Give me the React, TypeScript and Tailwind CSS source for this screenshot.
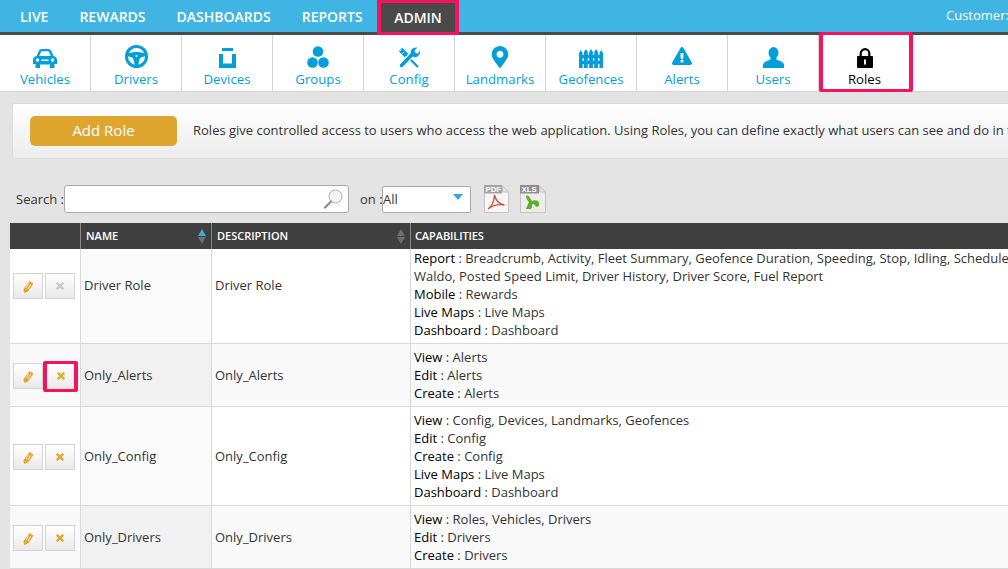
import React from 'react';
import { FaExclamationTriangle, FaMapMarkerAlt } from 'react-icons/fa';

const CarIcon = () => (
    <svg width="24" height="19" viewBox="0 0 24 19" fill="#009fdb">
        <path d="M3.500 7L6 1.800C6.400.7 7.200 0 8.500 0h7c1.300 0 2.100.7 2.500 1.800L20.500 7c2 .5 3.500 2 3.500 4v4h-2.500v4H17v-3.500H7V19H2.500v-4H0v-4c0-2 1.500-3.500 3.500-4z" />
        <path d="M6.200 7L8 3c.2-.5.5-.7 1-.7h6c.5 0 .8.2 1 .7l1.800 4z" fill="#fff" />
        <circle cx="4.500" cy="11" r="1.700" fill="#fff" />
        <circle cx="19.500" cy="11" r="1.700" fill="#fff" />
        <rect x="8.500" y="10.500" width="7" height="1.500" fill="#fff" />
    </svg>
);

const SteeringIcon = () => (
    <svg width="23" height="23" viewBox="0 0 23 23" fill="#009fdb">
        <circle cx="11.500" cy="11.500" r="10" fill="none" stroke="#009fdb" strokeWidth="3" />
        <path d="M2.500 8.500C8 6.500 15 6.500 20.500 8.500v2.500l-5.500 2-2 7.500h-3L8 13l-5.500-2z" />
        <circle cx="11.500" cy="11" r="1" fill="#fff" />
    </svg>
);

const DeviceIcon = () => (
    <svg width="17" height="20" viewBox="0 0 17 20" fill="#009fdb">
        <rect x="3" y="0" width="11" height="3" />
        <path d="M0 6h4v9.500h9V6h4v14H0z" />
    </svg>
);

const GroupsIcon = () => (
    <svg width="22" height="22" viewBox="0 0 22 22" fill="#009fdb">
        <circle cx="11" cy="5.500" r="5.300" />
        <circle cx="5.500" cy="16.500" r="5.300" />
        <circle cx="16.500" cy="16.500" r="5.300" />
    </svg>
);

const ToolsIcon = () => (
    <svg width="22" height="21" viewBox="0 0 22 21" fill="none" stroke="#009fdb">
        <path d="M2.500 2.500l6 6" strokeWidth="5" stroke="#009fdb" />
        <path d="M1.500 4.500l2-2M4 7l2-2" strokeWidth="0.800" stroke="#fff" />
        <path d="M8 8l12 12" strokeWidth="2.200" />
        <path d="M4 18L14 7.500" strokeWidth="6" stroke="#fff" />
        <path d="M3.500 18.500L14.500 7" strokeWidth="3.500" strokeLinecap="round" />
        <path d="M13 3.500C14 1 17 0 19.500.5L16.500 3.500l1 2.500 2.500.5 2-3c.5 3-1 5.500-3.500 6.500-2 .5-4 0-5-1.500-1-1.500-1-3-.5-4.500z" fill="#009fdb" stroke="none" />
    </svg>
);

const FenceIcon = () => (
    <svg width="24" height="19" viewBox="0 0 24 19" fill="#009fdb">
        <path d="M0 4l1.800-3 1.800 3v15H0zM5 3l1.900-3 1.900 3v16H5zM10.100 3L12 0l1.900 3v16h-3.800zM15.200 3l1.900-3L19 3v16h-3.800zM20.400 4l1.800-3L24 4v15h-3.600z" />
        <rect x="0" y="6" width="24" height="3" />
        <rect x="0" y="12" width="24" height="3" />
    </svg>
);

const UserIcon = () => (
    <svg width="21" height="21" viewBox="0 0 21 21" fill="#009fdb">
        <ellipse cx="10.500" cy="5.800" rx="5" ry="5.800" />
        <path d="M7.500 10.500v2c-3 1.500-6.500 2-7.500 5V21h21v-3.500c-1-3-4.500-3.500-7.500-5v-2z" />
    </svg>
);

const LockIcon = () => (
    <svg width="16" height="20" viewBox="0 0 16 20" fill="#000">
        <path d="M3.700 9V5.500a4.300 4.300 0 0 1 8.600 0V9" fill="none" stroke="#000" strokeWidth="2.200" />
        <rect x="0" y="8" width="16" height="12" rx="1" />
        <rect x="7" y="11.500" width="2" height="5" fill="#fff" />
    </svg>
);

const PencilIcon = () => (
    <svg width="11" height="13" viewBox="0 0 11 13" fill="#e0a82e">
        <path d="M6.500 1L10.500 3.500 5 11.500 1 13 .5 9z" />
        <path d="M5.500 3.500L3 8M7.500 4.500L5 9" stroke="#fff" strokeWidth="0.700" />
    </svg>
);

const CrossIcon = ({ color }: { color: string }) => (
    <svg width="8" height="8" viewBox="0 0 8 8" fill="none" stroke={color} strokeWidth="2.300">
        <path d="M.7.7l6.600 6.600M7.300.7L.7 7.300" />
    </svg>
);

const PdfIcon = () => (
    <svg width="25" height="28" viewBox="0 0 25 28">
        <path d="M.5 1h18l6 6v20.500H.5z" fill="#f7f7f7" stroke="#c4c4c4" />
        <path d="M18.500 1v6h6z" fill="#e2e2e2" stroke="#c4c4c4" />
        <rect x="0" y="0" width="18" height="8.500" fill="#a3a3a3" />
        <text x="1.500" y="7.300" fontSize="7.800" fontWeight="700" fill="#fff" fontFamily="'Liberation Sans', sans-serif">PDF</text>
        <path d="M4 24c3-2 6-7 6.500-14 1 5 4 9 10 10-6-1-11 0-16.500 4z" fill="none" stroke="#e04a3a" strokeWidth="1.300" />
    </svg>
);

const XlsIcon = () => (
    <svg width="26" height="28" viewBox="0 0 26 28">
        <path d="M.5 1h19l6 6v20.500H.5z" fill="#ececec" stroke="#c4c4c4" />
        <path d="M19.500 1v6h6z" fill="#e2e2e2" stroke="#c4c4c4" />
        <rect x="0" y="0" width="19" height="8.500" fill="#8f8f8f" />
        <text x="1.500" y="7.300" fontSize="7.800" fontWeight="700" fill="#fff" fontFamily="'Liberation Sans', sans-serif">XLS</text>
        <path d="M6 11c2-1 3 0 4 2l2 3c2-1 4-1 6 0 1 1 1 3 1 5l-3 1c-1-2-2-3-3-3l-1 1c0 2 0 3-1 4H6c1-3 2-5 3-7-2-2-3-4-3-6z" fill="#5fae2b" />
    </svg>
);

const SearchIcon = () => (
    <svg width="20" height="20" viewBox="0 0 20 20" fill="none">
        <circle cx="12.500" cy="7.500" r="6.500" fill="#f4f4f4" stroke="#b0b0b0" strokeWidth="1" />
        <path d="M8 12.500L2 18.500" stroke="#8c8c8c" strokeWidth="2.200" strokeLinecap="round" />
    </svg>
);

const SortArrows = ({ active }: { active?: boolean }) => (
    <div className="flex flex-col gap-[1px]">
        <div
            className={
                active
                    ? 'w-0 h-0 border-x-[4.500px] border-x-transparent border-b-[7px] border-b-[#40a9e0]'
                    : 'w-0 h-0 border-x-[4.500px] border-x-transparent border-b-[7px] border-b-[#6f6f6f]'
            }
        />
        <div className="w-0 h-0 border-x-[4.500px] border-x-transparent border-t-[7px] border-t-[#6f6f6f]" />
    </div>
);

const topLinks = ['LIVE', 'REWARDS', 'DASHBOARDS', 'REPORTS'];

const navItems = [
    { label: 'Vehicles', icon: <CarIcon /> },
    { label: 'Drivers', icon: <SteeringIcon /> },
    { label: 'Devices', icon: <DeviceIcon /> },
    { label: 'Groups', icon: <GroupsIcon /> },
    { label: 'Config', icon: <ToolsIcon /> },
    { label: 'Landmarks', icon: <FaMapMarkerAlt size={22} color="#009fdb" /> },
    { label: 'Geofences', icon: <FenceIcon /> },
    { label: 'Alerts', icon: <div className="mb-[2px]"><FaExclamationTriangle size={20} color="#009fdb" /></div> },
    { label: 'Users', icon: <UserIcon /> },
];

type Role = {
    name: string;
    rowClass: string;
    nameClass: string;
    cellClass: string;
    linesClass: string;
    disabled?: boolean;
    marked?: boolean;
    lines: [string, string][];
};

const roles: Role[] = [
    {
        name: 'Driver Role',
        rowClass: 'h-[95px] bg-white',
        nameClass: 'bg-[#fafafa]',
        cellClass: 'pb-[20px]',
        linesClass: 'pb-[4px]',
        disabled: true,
        lines: [
            ['Report', "Breadcrumb, Activity, Fleet Summary, Geofence Duration, Speeding, Stop, Idling, Schedule, Where's Waldo, Posted Speed Limit, Driver History, Driver Score, Fuel Report"],
            ['Mobile', 'Rewards'],
            ['Live Maps', 'Live Maps'],
            ['Dashboard', 'Dashboard'],
        ],
    },
    {
        name: 'Only_Alerts',
        rowClass: 'h-[63px] bg-[#f9f9f9]',
        nameClass: 'bg-[#f1f1f1]',
        cellClass: 'pt-[2px]',
        linesClass: 'pt-0',
        marked: true,
        lines: [
            ['View', 'Alerts'],
            ['Edit', 'Alerts'],
            ['Create', 'Alerts'],
        ],
    },
    {
        name: 'Only_Config',
        rowClass: 'h-[99px] bg-white',
        nameClass: 'bg-[#fafafa]',
        cellClass: 'pt-[2px]',
        linesClass: 'pt-0',
        lines: [
            ['View', 'Config, Devices, Landmarks, Geofences'],
            ['Edit', 'Config'],
            ['Create', 'Config'],
            ['Live Maps', 'Live Maps'],
            ['Dashboard', 'Dashboard'],
        ],
    },
    {
        name: 'Only_Drivers',
        rowClass: 'h-[63px] bg-[#f9f9f9]',
        nameClass: 'bg-[#f1f1f1]',
        cellClass: 'pt-[2px]',
        linesClass: 'pt-0',
        lines: [
            ['View', 'Roles, Vehicles, Drivers'],
            ['Edit', 'Drivers'],
            ['Create', 'Drivers'],
        ],
    },
];

function ActionButton({ children }: { children: React.ReactNode }) {
    return (
        <div className="w-[30px] h-[26px] shrink-0 flex items-center justify-center border border-[#d4d4d4] bg-gradient-to-b from-white to-[#e9e9e9]">
            {children}
        </div>
    );
}

function RoleRow({ role }: { role: Role }) {
    return (
        <div className={`w-[1100px] flex border-b border-[#d9d9d9] ${role.rowClass}`}>
            <div className={`w-[71px] shrink-0 flex items-center gap-[2px] pl-[3px] border-r border-[#d9d9d9] ${role.cellClass}`}>
                <ActionButton>
                    <PencilIcon />
                </ActionButton>
                {role.marked ? (
                    <div className="w-[35px] h-[31px] shrink-0 flex items-center justify-center border-x-[4px] border-y-[3px] border-[#f5135f] rounded-[2px] bg-gradient-to-b from-white to-[#e9e9e9] -ml-[2px]">
                        <CrossIcon color="#e0a82e" />
                    </div>
                ) : (
                    <ActionButton>
                        <CrossIcon color={role.disabled ? '#c8c8c8' : '#e0a82e'} />
                    </ActionButton>
                )}
            </div>
            <div className={`w-[131px] shrink-0 flex items-center pl-[3px] border-r border-[#d9d9d9] ${role.nameClass} ${role.cellClass}`}>
                {role.name}
            </div>
            <div className={`w-[199px] shrink-0 flex items-center pl-[3px] border-r border-[#d9d9d9] ${role.cellClass}`}>
                {role.name}
            </div>
            <div className={`w-[660px] shrink-0 flex flex-col justify-center pl-[3px] ${role.linesClass}`}>
                {role.lines.map(([key, value]) => (
                    <div key={key} className="text-[#333] leading-[18px]">
                        <span className="text-black">{key}</span> : {value}
                    </div>
                ))}
            </div>
        </div>
    );
}

export default function App() {
    return (
        <div className="w-[1008px] h-[569px] overflow-hidden bg-[#e3e3e3] font-['Open_Sans',sans-serif] text-[13px] text-[#333]">
            <header className="h-[35px] flex items-stretch bg-[#40b5e3] border-b-[3px] border-[#4a4a4a] pl-[4.500px] text-white text-[14px] font-semibold">
                {topLinks.map((link) => (
                    <div key={link} className="flex items-center px-[15.500px]">
                        {link}
                    </div>
                ))}
                <div className="h-[35px] flex items-center px-[13px] bg-[#4a4a4a] border-x-[4px] border-y-[3px] border-[#f5135f] rounded-b-[2px] ml-[-1px]">
                    ADMIN
                </div>
                <div className="ml-auto flex items-center whitespace-nowrap w-[62px] text-[13px] font-normal">
                    Customer:
                </div>
            </header>

            <nav className="h-[57px] flex bg-white border-b border-[#d4d4d4]">
                {navItems.map((item) => (
                    <div
                        key={item.label}
                        className="w-[91px] flex flex-col items-center border-r border-[#d4d4d4] text-[#009fdb] text-[13.200px] font-medium"
                    >
                        <div className="h-[24px] mt-[9px] flex items-end justify-center">{item.icon}</div>
                        <div className="mt-[2px] leading-[18px]">{item.label}</div>
                    </div>
                ))}
                <div className="w-[94px] h-[60px] -mt-[3px] pr-[3px] shrink-0 flex flex-col items-center border-x-[4px] border-y-[3px] border-[#f5135f] rounded-[2px] bg-white text-black text-[13.200px] font-medium">
                    <div className="h-[24px] mt-[9px] flex items-end justify-center">
                        <LockIcon />
                    </div>
                    <div className="mt-[2px] leading-[18px]">Roles</div>
                </div>
            </nav>

            <section className="w-[1100px] mt-[11px] ml-[12px] h-[56px] flex items-center pl-[17px] border border-[#dcdcdc] rounded-l-[3px] bg-gradient-to-b from-white to-[#ececec] whitespace-nowrap">
                <button className="w-[147px] h-[30px] shrink-0 rounded-[5px] bg-[#dfa62f] text-white text-[15px] pb-[1px]">
                    Add Role
                </button>
                <p className="ml-[16px]">
                    Roles give controlled access to users who access the web application. Using Roles, you can define exactly what users can see and do in the application.
                </p>
            </section>

            <div className="mt-[25px] ml-[16px] h-[30px] flex items-center">
                <span className="w-[48px] pt-[2px] whitespace-nowrap">Search :</span>
                <div className="w-[285px] h-[28px] flex items-center justify-end pr-[5px] bg-white border border-[#a8a8a8] rounded-[3px]">
                    <SearchIcon />
                </div>
                <span className="ml-[11px] w-[22px] pt-[2px] whitespace-nowrap">on :</span>
                <div className="w-[89px] h-[27px] flex items-center justify-between pr-[7px] bg-white border border-[#a8a8a8] rounded-[2px]">
                    <span className="pt-[2px]">All</span>
                    <div className="w-0 h-0 -mt-[4px] border-x-[5px] border-x-transparent border-t-[6px] border-t-[#3aa5de]" />
                </div>
                <div className="ml-[13px] flex gap-[11px]">
                    <PdfIcon />
                    <XlsIcon />
                </div>
            </div>

            <div className="mt-[9px] ml-[10px]">
                <div className="w-[1100px] h-[26px] flex bg-[#404040] text-white text-[11px] font-semibold">
                    <div className="w-[71px] shrink-0 border-r border-[#8a8a8a]" />
                    <div className="w-[131px] shrink-0 flex items-center justify-between pl-[5px] pr-[5px] border-r border-[#8a8a8a]">
                        NAME
                        <SortArrows active />
                    </div>
                    <div className="w-[199px] shrink-0 flex items-center justify-between pl-[5px] pr-[5px] border-r border-[#8a8a8a]">
                        DESCRIPTION
                        <SortArrows />
                    </div>
                    <div className="flex-1 flex items-center pl-[4px] tracking-[-0.1px]">CAPABILITIES</div>
                </div>
                {roles.map((role) => (
                    <RoleRow key={role.name} role={role} />
                ))}
            </div>
        </div>
    );
}
